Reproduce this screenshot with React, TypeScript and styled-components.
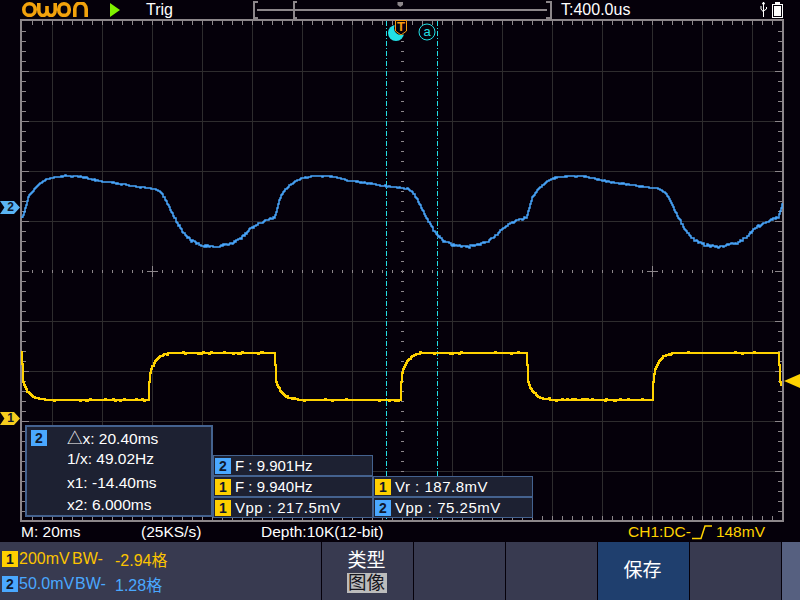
import styled, { createGlobalStyle } from "styled-components";

const YELLOW = "#ffd200";
const BLUE = "#4aa8ff";
const GRID = "#2e2c2e";
const FRAME = "#8c868a";
const CURSOR = "#22e0e6";

const GlobalStyle = createGlobalStyle`
    html, body { margin: 0; padding: 0; background: #05000a; }
    * { box-sizing: border-box; }
`;

const Page = styled.div`
    width: 800px;
    height: 600px;
    overflow: hidden;
    display: flex;
    flex-direction: column;
    background: #05000a;
    color: #fff;
    font-family: "Liberation Sans", "Noto Sans CJK SC", sans-serif;
`;

const Header = styled.header`
    height: 19px;
    display: flex;
    align-items: flex-start;
    padding-left: 22px;
    flex: none;
`;

const Logo = styled.svg`
    width: 66px;
    height: 15px;
    margin-top: 2px;
    flex: none;
`;

const PlayMark = styled.svg`
    width: 10px;
    height: 14px;
    margin: 3px 0 0 22px;
    flex: none;
`;

const TrigLabel = styled.div`
    width: 106px;
    margin-left: 26px;
    font-size: 16px;
    line-height: 19px;
`;

const MemoryBar = styled.svg`
    width: 300px;
    height: 19px;
    flex: none;
`;

const TimeLabel = styled.div`
    margin-left: 9px;
    font-size: 16px;
    line-height: 19px;
`;

const StatusIcons = styled.svg`
    width: 24px;
    height: 19px;
    margin-left: auto;
    margin-right: 16px;
    flex: none;
`;

const Screen = styled.main`
    position: relative;
    height: 503px;
    flex: none;
`;

const ScopeSvg = styled.svg`
    display: block;
    width: 800px;
    height: 503px;
`;

const ChannelMarker = styled.div<{ $top: number; $color: string }>`
    position: absolute;
    left: 0;
    top: ${(p) => p.$top}px;
    width: 20px;
    height: 13px;
    background: ${(p) => p.$color};
    color: #10182c;
    clip-path: polygon(0 0, 70% 0, 100% 50%, 70% 100%, 0 100%, 22% 50%);
    font-size: 12px;
    font-weight: 700;
    line-height: 13px;
    text-align: center;
    padding-left: 1px;
`;

const TriggerArrow = styled.div`
    position: absolute;
    right: 0;
    top: 355px;
    width: 16px;
    height: 14px;
    background: ${YELLOW};
    clip-path: polygon(0 50%, 100% 0, 100% 100%);
`;

const Overlay = styled.div`
    position: absolute;
    left: 25px;
    top: 406px;
    display: flex;
    align-items: flex-end;
`;

const CursorPanel = styled.section`
    position: relative;
    width: 188px;
    height: 92px;
    background: #1d2132;
    border: 2px solid #44628f;
    font-size: 15.5px;
    display: grid;
    grid-template-rows: 20px 24px 24px 20px;
    padding: 0 0 0 40px;
    align-items: center;
`;

const CursorBadge = styled.span`
    position: absolute;
    left: 4px;
    top: 2px;
`;

const Badge = styled.span<{ $ch: 1 | 2 }>`
    display: inline-block;
    width: 16px;
    height: 16px;
    background: ${(p) => (p.$ch === 1 ? "#ffcf00" : "#4aa8ff")};
    color: #10182c;
    font-size: 14px;
    font-weight: 700;
    line-height: 16px;
    letter-spacing: 0;
    text-align: center;
    flex: none;
`;

const MeasureGrid = styled.div`
    display: grid;
    grid-template-columns: 160px 160px;
    grid-template-rows: repeat(3, 21px);
    margin-bottom: -1px;
`;

const MeasureCell = styled.div<{ $spread?: boolean }>`
    display: flex;
    align-items: center;
    gap: 4px;
    padding-left: 1px;
    background: #1d2132;
    border: 1px solid #44628f;
    font-size: 15px;
    letter-spacing: ${(p) => (p.$spread ? "0.5px" : "0")};
    white-space: pre;
`;

const StatusRow = styled.div`
    height: 20px;
    flex: none;
    display: flex;
    align-items: center;
    padding-left: 21px;
    font-size: 15.5px;
`;

const StatusItem = styled.span<{ $width: number }>`
    width: ${(p) => p.$width}px;
    flex: none;
    white-space: pre;
`;

const TriggerStatus = styled.div`
    display: flex;
    align-items: center;
    margin-left: auto;
    margin-right: 35px;
    color: ${YELLOW};
    font-size: 15.5px;
`;

const EdgeIcon = styled.svg`
    width: 20px;
    height: 16px;
    margin: 0 4px 0 1px;
`;

const MenuBar = styled.nav`
    flex: 1;
    display: flex;
    background: #383a50;
`;

const ChannelInfo = styled.div`
    width: 321px;
    flex: none;
    padding: 9px 0 0 2px;
    display: flex;
    flex-direction: column;
    gap: 9px;
`;

const ChannelRow = styled.div<{ $color: string }>`
    height: 16px;
    display: flex;
    align-items: center;
    color: ${(p) => p.$color};
    font-size: 16px;
    white-space: pre;
`;

const ChannelValue = styled.span<{ $width: number }>`
    width: ${(p) => p.$width}px;
    margin-left: ${(p) => (p.$width > 45 ? 1 : 0)}px;
    flex: none;
`;

const MenuButton = styled.button<{ $active?: boolean }>`
    width: 92px;
    flex: none;
    padding: 0;
    border: 0;
    border-left: 1px solid #05000a;
    background: ${(p) => (p.$active ? "#1f3f6e" : "transparent")};
    color: #fff;
    font-family: inherit;
    display: flex;
    flex-direction: column;
    align-items: center;
    justify-content: center;
`;

const MenuTitle = styled.span<{ $shift: number }>`
    font-size: 19px;
    line-height: 22px;
    margin-right: ${(p) => p.$shift}px;
`;

const MenuChoice = styled.span`
    width: 40px;
    height: 20px;
    margin-top: 1px;
    margin-right: 2px;
    background: #bcbcbc;
    color: #15151c;
    font-size: 18.5px;
    line-height: 20px;
    text-align: center;
`;

const EdgeStrip = styled.div`
    flex: 1;
    background: #566080;
    border-left: 1px solid #05000a;
`;

function makeRandom(seed: number) {
    let s = seed;
    return () => {
        s = (s * 16807) % 2147483647;
        return s / 2147483647;
    };
}

const BLUE_POINTS: [number, number][] = [
    [0, 218], [3, 208], [6, 197], [11, 190], [16, 185], [21, 181], [28, 178], [41, 176], [55, 176],
    [78, 181], [111, 186], [133, 189], [138, 192], [143, 199], [148, 210], [155, 223], [161, 233],
    [168, 240], [178, 245], [193, 247], [211, 243], [220, 237], [228, 229], [235, 224], [245, 220], [252, 217],
];

function blueAt(t: number) {
    for (let i = 1; i < BLUE_POINTS.length; i++) {
        const [x0, y0] = BLUE_POINTS[i - 1];
        const [x1, y1] = BLUE_POINTS[i];
        if (t <= x1) return y0 + ((y1 - y0) * (t - x0)) / (x1 - x0);
    }
    return 217;
}

function bluePath() {
    const rnd = makeRandom(4711);
    let d = "M22 218";
    for (let x = 22; x <= 782; x++) {
        const t = (x - 22) % 252;
        const amount = t > 150 ? 2.4 : 1.2;
        const y = Math.round(blueAt(t) + (rnd() - 0.5) * amount);
        d += `V${y}H${x + 1}`;
    }
    return d;
}

const RISES = [149, 401, 653];
const FALLS = [22, 275, 527, 779];

function yellowAt(x: number) {
    const rise = Math.max(...RISES.filter((e) => e <= x), -999);
    const fall = Math.max(...FALLS.filter((e) => e <= x), -999);
    if (rise > fall) {
        const t = x - rise;
        return t === 0 ? 382 : 352.5 + 20 * Math.exp(-(t - 1) / 6);
    }
    const t = x - fall;
    return t === 0 ? 365 : 400 - 18 * Math.exp(-(t - 1) / 6);
}

function yellowPath() {
    const rnd = makeRandom(1234);
    let d = "M22 351";
    for (let x = 22; x <= 781; x++) {
        const jitter = rnd() < 0.14 ? (rnd() < 0.5 ? -1 : 1) : 0;
        const y = Math.round(yellowAt(x)) + jitter;
        d += `V${y}H${x + 1}`;
    }
    return d;
}

function range(from: number, to: number, step: number) {
    const out: number[] = [];
    for (let v = from; v <= to; v += step) out.push(v);
    return out;
}

const V_LINES = range(52, 752, 50).filter((x) => x !== 402);
const H_LINES = range(71, 471, 50).filter((y) => y !== 271);
const X_TICKS = range(32, 772, 10);
const Y_TICKS = range(31, 511, 10);

function ScopeGrid() {
    return (
        <g shapeRendering="crispEdges">
            {V_LINES.map((x) => <path key={x} d={`M${x + 0.5} 21V520`} stroke={GRID} />)}
            {H_LINES.map((y) => <path key={y} d={`M22 ${y + 0.5}H782`} stroke={GRID} />)}
            {X_TICKS.map((x) => (
                <path
                    key={x}
                    d={`M${x + 0.5} 21V25M${x + 0.5} 516V520M${x + 0.5} 270V273`}
                    stroke={FRAME}
                />
            ))}
            {Y_TICKS.map((y) => (
                <path
                    key={y}
                    d={`M22 ${y + 0.5}H${(y - 21) % 50 === 0 ? 29 : 26}M782 ${y + 0.5}H${(y - 21) % 50 === 0 ? 775 : 778}M401 ${y + 0.5}H404`}
                    stroke={FRAME}
                />
            ))}
            <path d="M147 271.5H158M647 271.5H658M152.5 266V277M652.5 266V277" stroke={FRAME} />
            <path d="M21 19V522M783 19V522M20 20H784M20 521H784" stroke={FRAME} strokeWidth="2" />
        </g>
    );
}

function TriggerMarks() {
    return (
        <g>
            <path d="M386.5 21V520M437.5 21V520" stroke={CURSOR} strokeDasharray="5 2 1 2" shapeRendering="crispEdges" />
            <circle cx="396" cy="33" r="8" fill={CURSOR} />
            <circle cx="401" cy="28" r="7" fill="#05000a" />
            <path d="M395.5 20.5H406.5V31L401 35L395.5 31Z" fill="#05000a" stroke="#f59a10" />
            <text x="401" y="31" fontSize="13" fontWeight="700" fill="#f59a10" textAnchor="middle">T</text>
            <circle cx="427" cy="32" r="8" fill="none" stroke={CURSOR} />
            <text x="427" y="36" fontSize="13" fill={CURSOR} textAnchor="middle">a</text>
        </g>
    );
}

export default function App() {
    return (
        <Page>
            <GlobalStyle />
            <Header>
                <Logo viewBox="0 0 66 15">
                    <g fill="none" stroke="#f2a20c" strokeWidth="3.6">
                        <rect x="1.8" y="1.8" width="11.4" height="11.6" rx="5.7" />
                        <path d="M16.8 1V8A4 5.4 0 0 0 25 8V4V8A4 5.4 0 0 0 33.2 8V1" />
                        <rect x="36.8" y="1.8" width="10.4" height="11.6" rx="5.2" />
                        <path d="M52.8 15V7A4.8 5.2 0 0 1 64.2 7V15" />
                    </g>
                </Logo>
                <PlayMark viewBox="0 0 10 14">
                    <path d="M0 0L10 7L0 14Z" fill="#80f000" />
                </PlayMark>
                <TrigLabel>Trig</TrigLabel>
                <MemoryBar viewBox="0 0 300 19">
                    <g fill="none" stroke="#8c868a" shapeRendering="crispEdges">
                        <path d="M6 2H1.5V17.5H6M45 2H41.5V17.5H45" strokeWidth="2" />
                        <path d="M5 10H295" strokeWidth="2" />
                        <path d="M294 2H298.5V17.5H294" strokeWidth="2" />
                    </g>
                    <path d="M145.5 2H151V5L148.2 7L145.5 5Z" fill="#8c868a" />
                </MemoryBar>
                <TimeLabel>T:400.0us</TimeLabel>
                <StatusIcons viewBox="0 0 24 19">
                    <g stroke="#fff" fill="none">
                        <path d="M3.5 2V17M1 6V9L3.5 12M6.5 7V9L3.5 11" />
                        <path d="M2.5 4L3.5 2L4.5 4Z" fill="#fff" />
                        <rect x="12.5" y="4.5" width="10" height="13" />
                    </g>
                    <rect x="15" y="2" width="5" height="2" fill="#fff" />
                    <rect x="14" y="6" width="7" height="10" fill="#fff" />
                </StatusIcons>
            </Header>

            <Screen>
                <ScopeSvg viewBox="0 19 800 503">
                    <ScopeGrid />
                    <TriggerMarks />
                    <path d={bluePath()} fill="none" stroke={BLUE} strokeWidth="1.5" />
                    <path d={yellowPath()} fill="none" stroke={YELLOW} strokeWidth="2" shapeRendering="crispEdges" />
                </ScopeSvg>
                <ChannelMarker $top={182} $color="#5ab4f4">2</ChannelMarker>
                <ChannelMarker $top={393} $color="#f6cd1e">1</ChannelMarker>
                <TriggerArrow />
                <Overlay>
                    <CursorPanel>
                        <CursorBadge><Badge $ch={2}>2</Badge></CursorBadge>
                        <span>△x: 20.40ms</span>
                        <span>1/x: 49.02Hz</span>
                        <span>x1: -14.40ms</span>
                        <span>x2: 6.000ms</span>
                    </CursorPanel>
                    <MeasureGrid>
                        <MeasureCell><Badge $ch={2}>2</Badge>F : 9.901Hz</MeasureCell>
                        <span />
                        <MeasureCell><Badge $ch={1}>1</Badge>F : 9.940Hz</MeasureCell>
                        <MeasureCell $spread><Badge $ch={1}>1</Badge>Vr : 187.8mV</MeasureCell>
                        <MeasureCell $spread><Badge $ch={1}>1</Badge>Vpp : 217.5mV</MeasureCell>
                        <MeasureCell $spread><Badge $ch={2}>2</Badge>Vpp : 75.25mV</MeasureCell>
                    </MeasureGrid>
                </Overlay>
            </Screen>

            <StatusRow>
                <StatusItem $width={120}>M: 20ms</StatusItem>
                <StatusItem $width={120}>(25KS/s)</StatusItem>
                <StatusItem $width={130}>Depth:10K(12-bit)</StatusItem>
                <TriggerStatus>
                    CH1:DC-
                    <EdgeIcon viewBox="0 0 20 16">
                        <path d="M0 14.5H9L13 2H20" fill="none" stroke={YELLOW} strokeWidth="1.5" />
                    </EdgeIcon>
                    148mV
                </TriggerStatus>
            </StatusRow>

            <MenuBar>
                <ChannelInfo>
                    <ChannelRow $color="#fcc400">
                        <Badge $ch={1}>1</Badge>
                        <ChannelValue $width={53}>200mV</ChannelValue>
                        <ChannelValue $width={43}>BW-</ChannelValue>
                        <span>-2.94格</span>
                    </ChannelRow>
                    <ChannelRow $color={BLUE}>
                        <Badge $ch={2}>2</Badge>
                        <ChannelValue $width={56}>50.0mV</ChannelValue>
                        <ChannelValue $width={40}>BW-</ChannelValue>
                        <span>1.28格</span>
                    </ChannelRow>
                </ChannelInfo>
                <MenuButton>
                    <MenuTitle $shift={2}>类型</MenuTitle>
                    <MenuChoice>图像</MenuChoice>
                </MenuButton>
                <MenuButton />
                <MenuButton />
                <MenuButton $active>
                    <MenuTitle $shift={2}>保存</MenuTitle>
                </MenuButton>
                <MenuButton />
                <EdgeStrip />
            </MenuBar>
        </Page>
    );
}
